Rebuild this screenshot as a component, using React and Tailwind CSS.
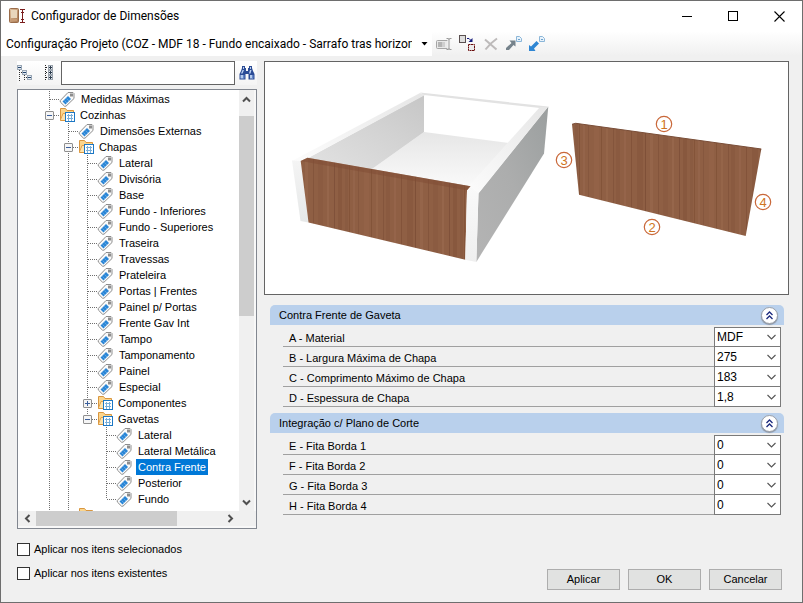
import React from 'react';

const UI = "font-['Liberation_Sans',Arial,sans-serif]";
const CAPTION = "font-['Roboto','Segoe_UI',sans-serif]";

const treeRows = [
  { label: 'Medidas Máximas', guides: ['tee'] },
  { label: 'Cozinhas', guides: ['minus'], folder: true },
  { label: 'Dimensões Externas', guides: ['line', 'tee'] },
  { label: 'Chapas', guides: ['line', 'minus'], folder: true },
  ...[
    'Lateral',
    'Divisória',
    'Base',
    'Fundo - Inferiores',
    'Fundo - Superiores',
    'Traseira',
    'Travessas',
    'Prateleira',
    'Portas | Frentes',
    'Painel p/ Portas',
    'Frente Gav Int',
    'Tampo',
    'Tamponamento',
    'Painel',
    'Especial',
  ].map((label) => ({ label, guides: ['line', 'line', 'tee'] })),
  { label: 'Componentes', guides: ['line', 'line', 'plus'], folder: true },
  { label: 'Gavetas', guides: ['line', 'line', 'minusEnd'], folder: true },
  { label: 'Lateral', guides: ['line', 'line', 'none', 'tee'] },
  { label: 'Lateral Metálica', guides: ['line', 'line', 'none', 'tee'] },
  { label: 'Contra Frente', guides: ['line', 'line', 'none', 'tee'], selected: true },
  { label: 'Posterior', guides: ['line', 'line', 'none', 'tee'] },
  { label: 'Fundo', guides: ['line', 'line', 'none', 'end'] },
  { label: '', guides: ['line', 'line'], folder: true },
];

const groups = [
  {
    title: 'Contra Frente de Gaveta',
    fields: [
      { id: 'a', label: 'A - Material', value: 'MDF' },
      { id: 'b', label: 'B - Largura Máxima de Chapa', value: '275' },
      { id: 'c', label: 'C - Comprimento Máximo de Chapa', value: '183' },
      { id: 'd', label: 'D - Espessura de Chapa', value: '1,8' },
    ],
  },
  {
    title: 'Integração c/ Plano de Corte',
    fields: [
      { id: 'e', label: 'E - Fita Borda 1', value: '0' },
      { id: 'f', label: 'F - Fita Borda 2', value: '0' },
      { id: 'g', label: 'G - Fita Borda 3', value: '0' },
      { id: 'h', label: 'H - Fita Borda 4', value: '0' },
    ],
  },
];

function AppIcon() {
  return (
    <svg width="17" height="16" viewBox="0 0 17 16" aria-hidden="true">
      <defs>
        <linearGradient id="doorFill" x1="0" y1="0" x2="1" y2="1">
          <stop offset="0" stopColor="#e2c3a0" />
          <stop offset="1" stopColor="#a87852" />
        </linearGradient>
      </defs>
      <rect x="0.5" y="0.5" width="9" height="14" rx="1" fill="url(#doorFill)" stroke="#9a6c4a" />
      <rect x="2" y="2" width="6" height="8" fill="#e9d6bc" />
      <rect x="2" y="11" width="6" height="2" fill="#c79b75" />
      <path d="M11 1.5h5M11 14.5h5M13.5 2v12M12 4.5h3M12 11.5h3" stroke="#7a1c1c" fill="none" />
    </svg>
  );
}

function RenameIcon() {
  return (
    <svg width="16" height="16" viewBox="0 0 16 16" fill="none" aria-hidden="true">
      <rect x="0.5" y="4.5" width="12" height="8" rx="1" fill="#e9e9e9" stroke="#a5a5a5" />
      <rect x="2" y="6" width="4" height="5" fill="#b4b4b4" />
      <rect x="6" y="6" width="3" height="5" fill="#cfcfcf" />
      <path d="M13 3v10" stroke="#f4f4f4" strokeWidth="3" />
      <path d="M10.5 2.500h2l0.500 1 0.500-1h2M13 3v10M10.500 13.500h2l0.500-1 0.500 1h2" stroke="#999" />
    </svg>
  );
}

function ReplaceIcon() {
  return (
    <svg width="17" height="17" viewBox="0 0 17 17" fill="none" aria-hidden="true">
      <rect x="0.500" y="0.500" width="6" height="7" fill="#dedede" stroke="#5a5050" />
      <rect x="9.500" y="9.500" width="6" height="6" fill="#ececec" stroke="#6a0c0c" strokeDasharray="2 0.500" />
      <path d="M8 3.500h2l2 2" stroke="#151b7c" />
      <path d="M9.500 7h4V3z" fill="#151b7c" />
    </svg>
  );
}

function DeleteIcon() {
  return (
    <svg width="16" height="16" viewBox="0 0 16 16" fill="none" aria-hidden="true">
      <path d="M2 3.500L13.500 13.500" stroke="#bdbaba" strokeWidth="2" />
      <path d="M14 2.500C9 6 5 10 2.500 13.500" stroke="#bdbaba" strokeWidth="2" />
    </svg>
  );
}

function PageMark() {
  return (
    <g>
      <path d="M10.500 0.500h3l2 2v3h-5z" fill="#e8f2fb" stroke="#8bb6d8" />
      <path d="M12 3.500h2" stroke="#6ea3cc" />
    </g>
  );
}

function ExportIcon() {
  return (
    <svg width="16" height="16" viewBox="0 0 16 16" fill="none" aria-hidden="true">
      <path d="M9.500 4.500v6L7.500 9l-4.500 5H0v-2l5.500-5L3.500 4.500z" fill="#76838c" />
      <PageMark />
    </svg>
  );
}

function ImportIcon() {
  return (
    <svg width="16" height="16" viewBox="0 0 16 16" fill="none" aria-hidden="true">
      <path d="M0 15V9l2 1.500L7.500 5l2.500 2.500-5 5L6.500 15z" fill="#2f86d3" />
      <PageMark />
    </svg>
  );
}

function CollapseTreeIcon() {
  return (
    <svg width="16" height="16" viewBox="0 0 16 16" fill="none" aria-hidden="true">
      <path d="M2.500 5v11M7.500 10v6M4 7.500h1M9 12.500h1" stroke="#333" strokeDasharray="1 1" />
      <rect x="0.500" y="0.500" width="4" height="4" fill="#e6ebf1" stroke="#9aa7b5" />
      <rect x="5.500" y="5.500" width="4" height="4" fill="#e6ebf1" stroke="#9aa7b5" />
      <rect x="10.500" y="10.500" width="4" height="4" fill="#e6ebf1" stroke="#9aa7b5" />
      <path d="M1 2.500h3M6 7.500h3M11 12.500h3" stroke="#23466f" />
    </svg>
  );
}

function ExpandTreeIcon() {
  return (
    <svg width="10" height="16" viewBox="0 0 10 16" fill="none" aria-hidden="true">
      <path d="M1.500 0v16" stroke="#222" strokeDasharray="1 1" />
      <path d="M2 2.500h3M2 7.500h3M2 12.500h3" stroke="#222" strokeDasharray="1 1" />
      {[0, 5, 10].map((y) => (
        <g key={y} transform={`translate(4 ${y})`}>
          <rect x="0.500" y="0.500" width="4" height="4" fill="#e6ebf1" stroke="#9aa3ad" />
          <path d="M1 2.500h3M2.500 1v3" stroke="#2b3a4a" />
        </g>
      ))}
    </svg>
  );
}

function BinocularsIcon() {
  return (
    <svg width="16" height="14" viewBox="0 0 16 14" aria-hidden="true">
      <path d="M3 0h3v2h1v3h2V2h1V0h3v2l1 3 1.500 3v5.500H9.500V8h-3v5.500H0.500V8L2 5l1-3z" fill="#2c4c96" />
      <path d="M4 1h1v2H4zM11 1h1v2h-1zM3.500 4l-1.500 3.500h1.500L5 4zM11 4l-1 3.500h1.500L12.500 4z" fill="#b9cff0" />
      <path d="M1.500 9h3v3.500h-3zM11 9h3v3.500h-3z" fill="#b4cbee" />
      <path d="M4 9h1.500v3.500H4zM13 9h1.500v3.500H13z" fill="#6486c8" />
    </svg>
  );
}

function TagIcon() {
  return (
    <svg width="16" height="16" viewBox="0 0 16 16" className="shrink-0" aria-hidden="true">
      <path
        d="M9 1.500h5l1 1v5L7 15.200H5.500L1.300 11V9.500z"
        fill="#fafafa"
        stroke="#8d8d8d"
        strokeLinejoin="round"
      />
      <rect x="11.500" y="3" width="2" height="2" fill="#fff" stroke="#8d8d8d" />
      <path d="M9 5l3 3-5.500 5.500-3-3z" fill="#2a86d6" />
      <path d="M5.500 9.500l2.500 2.500M7.500 7.500l2.500 2.500" stroke="#6cabe4" strokeWidth="0.800" />
    </svg>
  );
}

function FolderIcon() {
  return (
    <svg width="17" height="16" viewBox="0 0 17 16" className="shrink-0" aria-hidden="true">
      <path d="M1.500 13.500V1.500h5l1.500 2h6.500v10z" fill="#fbd58c" stroke="#d9963f" />
      <path d="M1.500 13.500L4 6.500h11" fill="none" stroke="#e0a04c" />
      <path d="M2 13L4.500 7H15v6z" fill="#fde3ae" />
      <rect x="6.500" y="5.500" width="9" height="9" fill="#fff" stroke="#1c77c4" />
      <path d="M8 8.500h6M8 11.500h6M9.500 7v7M12.500 7v7" stroke="#79afd9" />
    </svg>
  );
}

function Guide({ kind }) {
  const box = kind === 'minus' || kind === 'plus' || kind === 'minusEnd';
  const toBottom = kind === 'line' || kind === 'tee' || kind === 'plus' || kind === 'minus';
  const toMiddle = kind === 'end' || kind === 'minusEnd';
  const branch = box || kind === 'tee' || kind === 'end';
  const drawing = (
    <svg width="19" height="16" viewBox="0 0 19 16" fill="none" className="block" aria-hidden="true">
      {toBottom && <path d="M9.500 0V16" stroke="#6f6f6f" strokeDasharray="1 1" />}
      {toMiddle && <path d="M9.500 0V8" stroke="#6f6f6f" strokeDasharray="1 1" />}
      {branch && <path d="M10 8.500H19" stroke="#6f6f6f" strokeDasharray="1 1" />}
      {box && (
        <>
          <rect x="5.500" y="4.500" width="8" height="8" rx="0.500" fill="#f5f5f5" stroke="#8f8f8f" />
          <path d={kind === 'plus' ? 'M7 8.500h5M9.500 6v5' : 'M7 8.500h5'} stroke="#3b5f9c" />
        </>
      )}
    </svg>
  );
  if (box) {
    return (
      <button type="button" aria-label={kind === 'plus' ? 'Expandir' : 'Recolher'} className="shrink-0">
        {drawing}
      </button>
    );
  }
  return <span className="shrink-0">{drawing}</span>;
}

function TreeRow({ row }) {
  return (
    <li className="flex h-4 items-center">
      {row.guides.map((kind, i) => (
        <Guide key={i} kind={kind} />
      ))}
      <span className={row.folder ? 'mr-[2px] shrink-0' : 'mr-[4px] shrink-0'}>
        {row.folder ? <FolderIcon /> : <TagIcon />}
      </span>
      {row.label && (
        <span
          className={
            row.selected
              ? 'h-4 bg-[#0078d7] px-[2px] leading-4 whitespace-nowrap text-white'
              : 'h-4 px-[2px] leading-4 whitespace-nowrap'
          }
        >
          {row.label}
        </span>
      )}
    </li>
  );
}

function Arrow({ d }) {
  return (
    <svg width="9" height="9" viewBox="0 0 9 9" fill="none" aria-hidden="true">
      <path d={d} stroke="#505050" strokeWidth="2" />
    </svg>
  );
}

function Tree() {
  return (
    <div className="flex min-h-[300px] flex-1 basis-0 flex-col border border-[#828790] bg-white">
      <div className="flex min-h-0 flex-1">
        <div className="h-full min-w-0 flex-1 basis-0 overflow-hidden">
          <ul className="h-0 pt-px pl-[22px]">
            {treeRows.map((row, i) => (
              <TreeRow key={i} row={row} />
            ))}
          </ul>
        </div>
        <div className="flex w-[17px] flex-col border-r-2 border-[#f8f8f8] bg-[#f0f0f0]">
          <button type="button" aria-label="Rolar para cima" className="flex h-[26px] items-center justify-center pb-2">
            <Arrow d="M1 6.500L4.500 3L8 6.500" />
          </button>
          <div className="h-[200px] bg-[#cdcdcd]" />
          <div className="flex-1" />
          <button type="button" aria-label="Rolar para baixo" className="flex h-[18px] items-center justify-center">
            <Arrow d="M1 2.500L4.500 6L8 2.500" />
          </button>
        </div>
      </div>
      <div className="flex h-[17px] border-b-2 border-[#f8f8f8] bg-[#f0f0f0]">
        <button type="button" aria-label="Rolar para a esquerda" className="flex w-[18px] items-center justify-center">
          <Arrow d="M6.500 1L3 4.500L6.500 8" />
        </button>
        <div className="w-[141px] bg-[#cdcdcd]" />
        <div className="flex-1" />
        <button type="button" aria-label="Rolar para a direita" className="flex w-[18px] items-center justify-center">
          <Arrow d="M2.500 1L6 4.500L2.500 8" />
        </button>
        <div className="w-[17px]" />
      </div>
    </div>
  );
}

const grain = [
  [0, 3, '#8a5b41'], [4, 1, '#845439'], [8, 2, '#94644a'], [13, 1, '#86573e'], [19, 5, '#936247'],
  [26, 1, '#835439'], [31, 2, '#956549'], [38, 1, '#84553c'], [41, 4, '#8a5a40'], [49, 2, '#95644a'],
  [56, 1, '#83533a'], [62, 6, '#89593f'], [70, 1, '#7f5038'], [75, 3, '#95654a'], [83, 1, '#84553c'],
  [88, 5, '#8b5b41'], [97, 2, '#96664b'], [104, 1, '#80513a'], [108, 4, '#88583e'],
];

const marks = [
  { n: 1, x: 664, y: 124 },
  { n: 2, x: 652, y: 227 },
  { n: 3, x: 564, y: 160 },
  { n: 4, x: 763, y: 202 },
];

function DrawerPicture() {
  return (
    <svg
      viewBox="265 62 523 232"
      className="h-[232px] w-full"
      role="img"
      aria-label="Gaveta com contra frente e numeração das bordas"
    >
      <defs>
        <pattern id="wood" width="115" height="300" patternUnits="userSpaceOnUse">
          <rect width="115" height="300" fill="#8f5f44" />
          {grain.map(([x, w, c]) => (
            <rect key={x} x={x} width={w} height="300" fill={c} />
          ))}
        </pattern>
        <linearGradient id="innerWall" x1="0" y1="1" x2="1" y2="0">
          <stop offset="0" stopColor="#e2e2e2" />
          <stop offset="0.600" stopColor="#d2d2d2" />
          <stop offset="1" stopColor="#c6c6c6" />
        </linearGradient>
        <linearGradient id="outerWall" x1="0" y1="1" x2="1" y2="0">
          <stop offset="0" stopColor="#b4b4b4" />
          <stop offset="0.500" stopColor="#acadad" />
          <stop offset="1" stopColor="#9b9f9f" />
        </linearGradient>
        <linearGradient id="floor" x1="0" y1="0" x2="0" y2="1">
          <stop offset="0" stopColor="#e6e6e6" />
          <stop offset="1" stopColor="#fafafa" />
        </linearGradient>
        <linearGradient id="strip" x1="0" y1="0" x2="0" y2="1">
          <stop offset="0" stopColor="#f4f4f4" />
          <stop offset="1" stopColor="#e6e8e8" />
        </linearGradient>
        <linearGradient id="frontStrip" x1="0" y1="0" x2="0" y2="1">
          <stop offset="0" stopColor="#f9f9f9" />
          <stop offset="1" stopColor="#efefef" />
        </linearGradient>
        <linearGradient id="topEdge" x1="0" y1="1" x2="1" y2="0">
          <stop offset="0" stopColor="#fcfcfc" />
          <stop offset="1" stopColor="#e6e6e6" />
        </linearGradient>
      </defs>
      <polygon points="424,132 509,143 470,187 372,169" fill="url(#floor)" />
      <polygon points="308,158 424,95 424,132 372,169" fill="url(#innerWall)" />
      <polygon points="292,161 420,93 425,95 308,158 301,161" fill="url(#topEdge)" />
      <polygon points="420,92.500 548,106.500 540,108 424,95" fill="#e2e2e2" />
      <polygon points="478.500,193 548.300,106.500 544,153.500 476.300,262" fill="url(#outerWall)" />
      <polygon points="468,187 540,107 548.300,106.500 478.500,193.500 467,191" fill="url(#topEdge)" />
      <polygon points="292,160.500 301,161 308.500,222.500 300.500,221" fill="url(#strip)" />
      <polygon points="300.700,161 307.500,157.700 470.500,186.300 467,190.300 465.300,259.700 308.500,222.500" fill="url(#wood)" />
      <polygon points="300.700,161 307.500,157.700 470.500,186.300 467,190.300" fill="#7f4c34" opacity="0.500" />
      <polygon points="467,191 470.500,187 478.500,193.300 476.300,262 465.300,259.700" fill="url(#frontStrip)" />
      <polygon points="572,124.300 575.700,123.300 761.300,149 745.700,236 579,194.700" fill="url(#wood)" />
      <path d="M572 124.300L575.700 123.300L761.300 149" fill="none" stroke="#7a4e38" />
      {marks.map((m) => (
        <g key={m.n}>
          <circle cx={m.x} cy={m.y} r="7.700" fill="#fff" stroke="#c9683a" strokeWidth="1.200" />
          <text
            x={m.x}
            y={m.y + 5}
            textAnchor="middle"
            fill="#cf7420"
            className="font-['Liberation_Sans',Arial,sans-serif] text-[13px]"
          >
            {m.n}
          </text>
        </g>
      ))}
    </svg>
  );
}

function Group({ group }) {
  return (
    <section>
      <header className="flex h-5 items-center justify-between rounded-t-[5px] bg-[#b9d0ec] pr-[6px] pl-[9px]">
        <h2>{group.title}</h2>
        <button
          type="button"
          aria-label="Recolher grupo"
          className="flex size-[17px] items-center justify-center rounded-full border border-[#9aa0aa] bg-white shadow-[0_1px_1px_#8a93a0]"
        >
          <svg width="9" height="9" viewBox="0 0 9 9" fill="none" aria-hidden="true">
            <path d="M1.500 4L4.500 1L7.500 4M1.500 8L4.500 5L7.500 8" stroke="#1c2a7e" strokeWidth="1.300" />
          </svg>
        </button>
      </header>
      <div className="mt-[2px] mr-[3px] ml-[13px]">
        {group.fields.map((f, i) => (
          <div key={f.id} className="flex h-5 items-stretch">
            <label
              htmlFor={`campo-${f.id}`}
              className="flex flex-1 items-center border-b border-[#a0a0a0] pt-[2px] pl-[6px]"
            >
              {f.label}
            </label>
            <div
              className={
                i === 0
                  ? 'grid w-[67px] border border-[#7a7a7a] bg-white'
                  : 'grid w-[67px] border-x border-b border-[#7a7a7a] bg-white'
              }
            >
              <select
                id={`campo-${f.id}`}
                defaultValue={f.value}
                className="col-start-1 row-start-1 min-w-0 appearance-none bg-transparent pl-[2px] text-[12px] leading-4 outline-none"
              >
                <option>{f.value}</option>
              </select>
              <svg
                width="9"
                height="6"
                viewBox="0 0 9 6"
                fill="none"
                className="pointer-events-none col-start-1 row-start-1 mr-[4px] self-center justify-self-end"
                aria-hidden="true"
              >
                <path d="M0.500 1L4.500 5L8.500 1" stroke="#555" strokeWidth="1.100" />
              </svg>
            </div>
          </div>
        ))}
      </div>
    </section>
  );
}

function TitleBar() {
  return (
    <header className="flex h-[30px] items-center justify-between pr-[17px] pl-2">
      <div className="flex items-center gap-[5px]">
        <AppIcon />
        <h1 className={`${CAPTION} text-[12px] leading-4`}>Configurador de Dimensões</h1>
      </div>
      <div className="flex items-center gap-[35px]">
        <button type="button" aria-label="Minimizar">
          <svg width="11" height="11" viewBox="0 0 11 11" aria-hidden="true">
            <path d="M0 5.500h10" stroke="#000" />
          </svg>
        </button>
        <button type="button" aria-label="Maximizar">
          <svg width="11" height="11" viewBox="0 0 11 11" fill="none" aria-hidden="true">
            <rect x="0.500" y="0.500" width="9" height="9" stroke="#000" />
          </svg>
        </button>
        <button type="button" aria-label="Fechar">
          <svg width="11" height="11" viewBox="0 0 11 11" aria-hidden="true">
            <path d="M0.500 0.500l10 10M10.500 0.500l-10 10" stroke="#000" strokeWidth="1.100" />
          </svg>
        </button>
      </div>
    </header>
  );
}

const tools = [
  { label: 'Renomear', icon: <RenameIcon /> },
  { label: 'Substituir', icon: <ReplaceIcon /> },
  { label: 'Excluir', icon: <DeleteIcon /> },
  { label: 'Exportar', icon: <ExportIcon /> },
  { label: 'Importar', icon: <ImportIcon /> },
];

function Toolbar() {
  return (
    <div className="flex h-[25px] items-center bg-linear-to-b from-white to-[#f0f0f0]">
      <div className="grid h-full w-[431px] items-center bg-white">
        <select
          aria-label="Configuração do projeto"
          className={`${CAPTION} col-start-1 row-start-1 ml-[5px] w-[406px] appearance-none text-[12px] leading-5 outline-none`}
        >
          <option>Configuração Projeto (COZ - MDF 18 - Fundo encaixado - Sarrafo tras horizontal)</option>
        </select>
        <svg
          width="7"
          height="4"
          viewBox="0 0 7 4"
          className="pointer-events-none col-start-1 row-start-1 mr-[4px] justify-self-end"
          aria-hidden="true"
        >
          <path d="M0.500 0h6L3.500 3.500z" fill="#000" />
        </svg>
      </div>
      <div className="flex items-center gap-[7px] pl-[4px]">
        {tools.map((t) => (
          <button key={t.label} type="button" aria-label={t.label}>
            {t.icon}
          </button>
        ))}
      </div>
    </div>
  );
}

function CheckRow({ id, label }) {
  return (
    <div className="flex h-[13px] items-center gap-[4px]">
      <input
        id={id}
        type="checkbox"
        className="size-[13px] appearance-none border border-[#333] bg-white checked:bg-[#0078d7]"
      />
      <label htmlFor={id} className="pb-[2px]">
        {label}
      </label>
    </div>
  );
}

export default function App() {
  return (
    <div
      className={`${UI} flex min-h-screen flex-col border border-[#6e6e6e] bg-[#f0f0f0] text-[11px] leading-4 text-black`}
    >
      <div className="bg-white">
        <TitleBar />
        <Toolbar />
      </div>
      <main className="flex flex-1 gap-[7px] pt-[5px] pr-[13px] pb-3 pl-4">
        <div className="flex w-[240px] flex-col">
          <div className="mb-[4px] flex h-6 items-center bg-linear-to-b from-white to-[#f4f4f4]">
            <div className="flex w-[44px] items-center gap-[11px]">
              <button type="button" aria-label="Recolher tudo">
                <CollapseTreeIcon />
              </button>
              <button type="button" aria-label="Expandir tudo">
                <ExpandTreeIcon />
              </button>
            </div>
            <input
              type="text"
              aria-label="Pesquisar"
              className="h-6 min-w-0 flex-1 border border-[#646464] bg-white px-1 outline-none"
            />
            <button type="button" aria-label="Localizar" className="ml-1 pr-[2px]">
              <BinocularsIcon />
            </button>
          </div>
          <Tree />
          <div className="flex flex-col gap-[11px] pt-[14px] pb-[10px]">
            <CheckRow id="selecionados" label="Aplicar nos itens selecionados" />
            <CheckRow id="existentes" label="Aplicar nos itens existentes" />
          </div>
        </div>
        <div className="flex min-w-0 flex-1 flex-col">
          <div className="border border-[#646464] bg-white">
            <DrawerPicture />
          </div>
          <div className="mt-[10px] mr-[5px] ml-[6px] flex flex-col gap-[6px]">
            {groups.map((g) => (
              <Group key={g.title} group={g} />
            ))}
          </div>
          <div className="mt-auto mr-[7px] flex justify-end gap-2">
            {['Aplicar', 'OK', 'Cancelar'].map((b) => (
              <button key={b} type="button" className="h-[21px] w-[73px] border border-[#adadad] bg-[#e1e2e1] pb-[2px]">
                {b}
              </button>
            ))}
          </div>
        </div>
      </main>
    </div>
  );
}
